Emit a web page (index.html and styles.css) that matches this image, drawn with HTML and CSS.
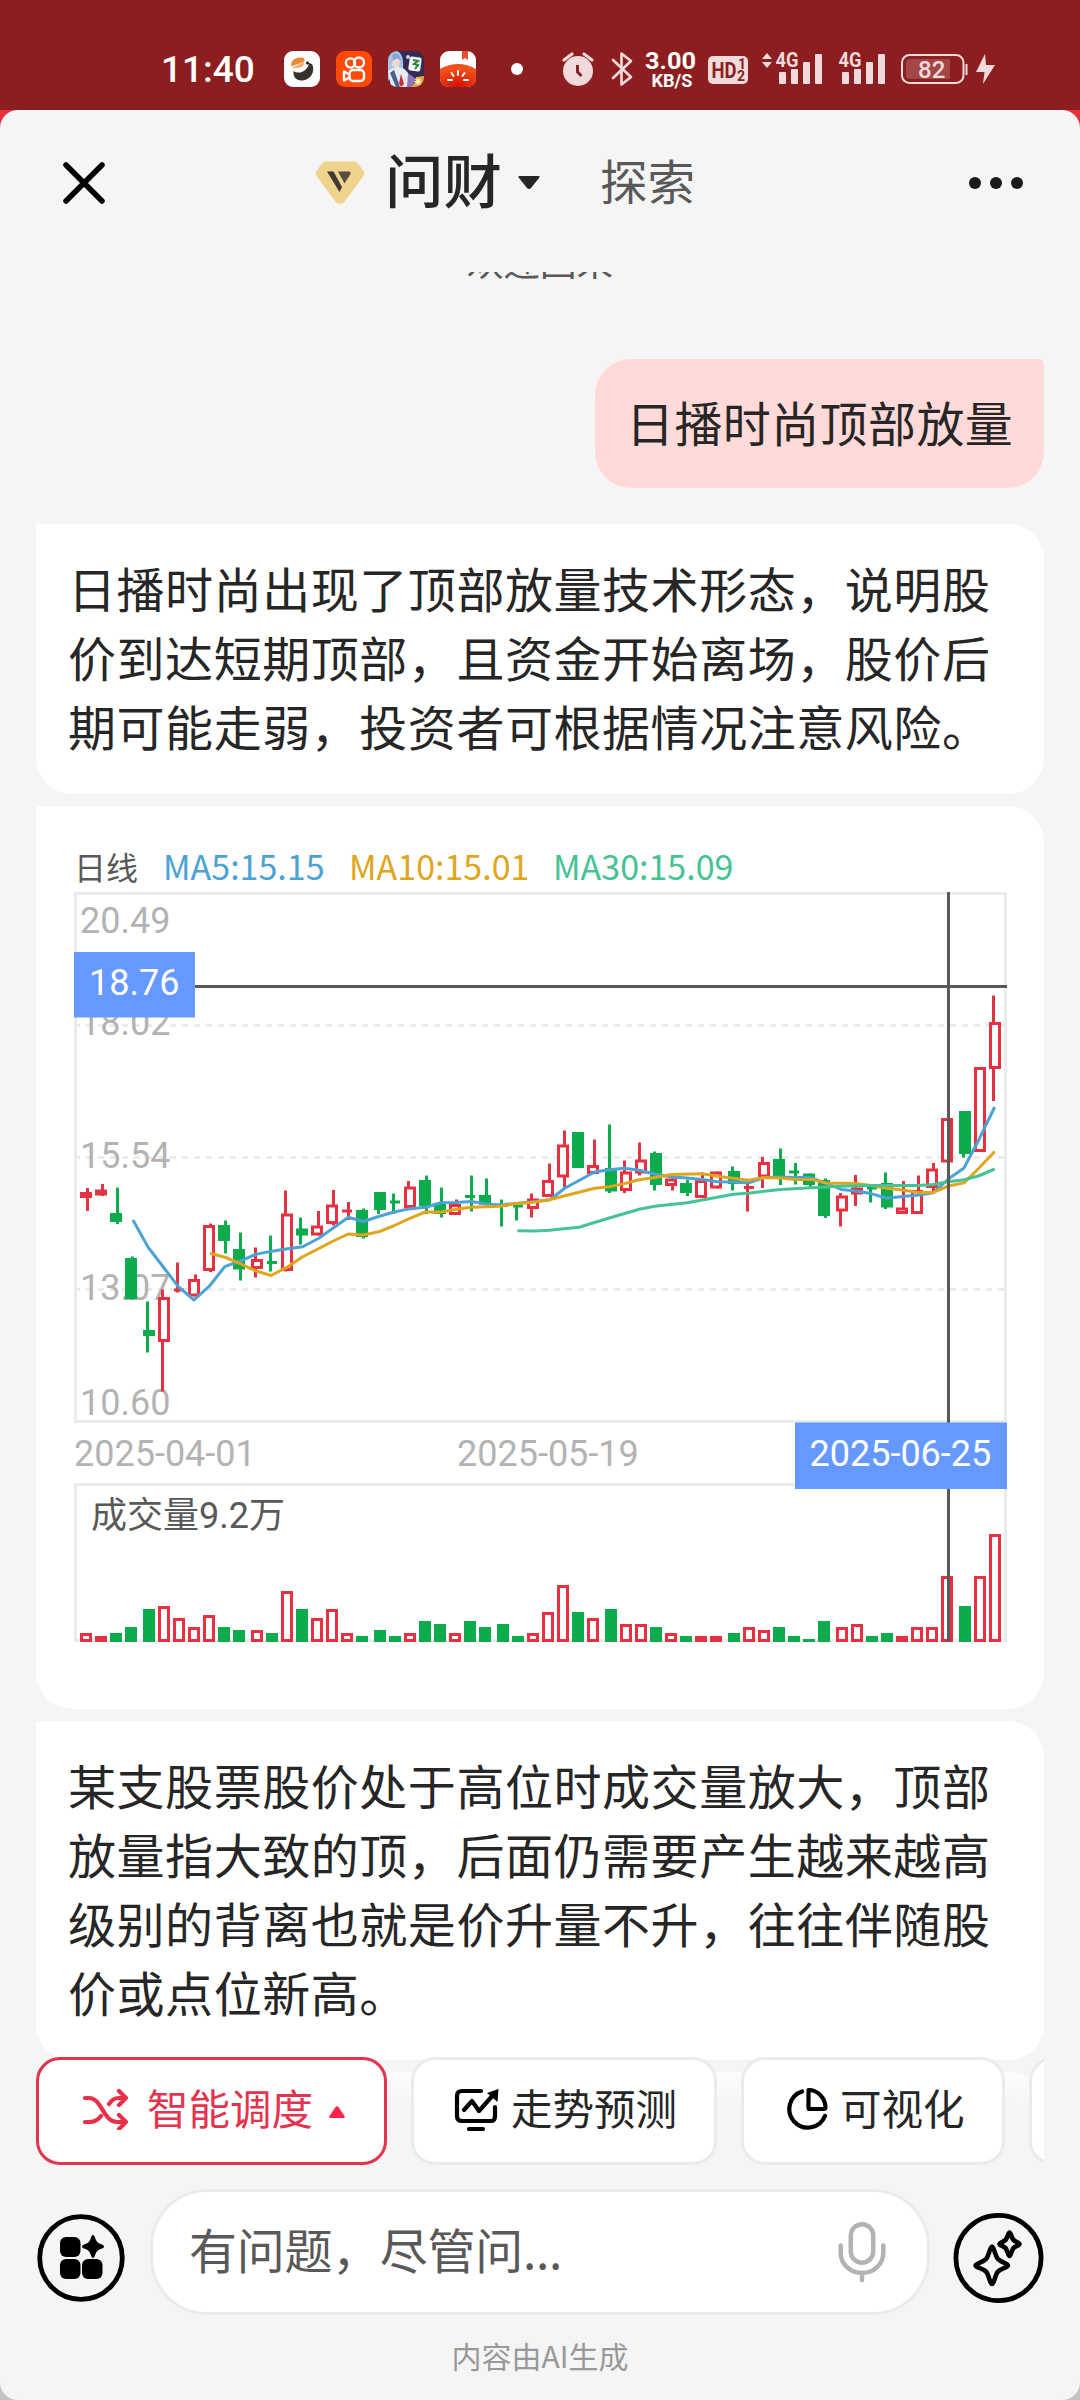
FILE: index.html
```html
<!DOCTYPE html>
<html lang="zh-CN">
<head>
<meta charset="utf-8">
<title>问财</title>
<link rel="stylesheet" href="styles.css">
</head>
<body>
<div class="statusbar">
  <span class="clock">11:40</span>
  <div class="apps">
    <svg class="app" viewBox="0 0 36 36"><rect width="36" height="36" rx="9" fill="#fff"/><path d="M7 15.500C7 9 11 6.500 17 6.500 20 6.500 21 8 20.500 9.500 19 12.500 14 12.500 7 15.500z" fill="#e98a3c"/><path d="M8 17C12 13.500 17 13.500 20.500 10.500 20.500 14 18 16.500 14 17z" fill="#f3ad75"/><path d="M28 13C32 21 26 29.500 17.500 29.500 12 29.500 9 26 9.500 20 15 24 24 20 25 12z" fill="#35312f"/><circle cx="23.500" cy="12" r="1.600" fill="#222"/></svg>
    <svg class="app" viewBox="0 0 36 36"><rect width="36" height="36" rx="9" fill="#ff4a08"/><g fill="none" stroke="#fff" stroke-width="2.400"><circle cx="14.500" cy="12" r="4.600"/><circle cx="23" cy="11.500" r="5"/><rect x="13.500" y="19" width="14.500" height="11" rx="3.500"/><path d="M13.500 23.500 8 20.500v9l5.500-3" stroke-linejoin="round"/></g></svg>
    <svg class="app" viewBox="0 0 36 36"><defs><clipPath id="tile"><rect width="36" height="36" rx="9"/></clipPath></defs><g clip-path="url(#tile)"><rect width="36" height="36" fill="#332a55"/><path d="M0 0h9c7 3 7 14 5 24L0 30z" fill="#a9c4e8"/><path d="M5 6c6-1 8 4 6 9-2 3-5 2-7-1z" fill="#f4d9cf"/><path d="M4 4c5-3 9 0 9 6-3-3-5-3-8 0z" fill="#86a6d6"/><path d="M0 20c8-6 15-5 20 2l1 14H3z" fill="#e6eaf2"/><path d="M6 19l6 17H8L2 22z" fill="#4c5f8d"/><path d="M13 23l3 10-3 3-2-4z" fill="#c93038"/><path d="M20 22l8 6-3 8h-6z" fill="#8b79b8"/><rect x="21" y="6" width="12" height="14" rx="2" fill="#f5f7ef" transform="rotate(8 27 13)"/><path d="M25 9l5 1-4 3 4 1-3 4" fill="none" stroke="#27844d" stroke-width="2"/><circle cx="20" cy="6" r="2" fill="#cfd3ea"/><path d="M36 25v11H22q6-2 6-10z" fill="#eda03b"/><path d="M30 27v7M26.500 30.500h7M27.500 28l5 5m0-5-5 5" stroke="#fff1bd" stroke-width="1.200"/></g></svg>
    <svg class="app" viewBox="0 0 36 36"><defs><radialGradient id="tomato" cx=".5" cy="1" r=".8"><stop stop-color="#d80c00"/><stop offset="1" stop-color="#f0501c"/></radialGradient></defs><rect width="36" height="36" rx="9" fill="#fff"/><path d="M22 0h6v9l-3-2-3 2z" fill="#e8502a"/><path d="M0 18q18-10 36 0v9q0 9-9 9H9q-9 0-9-9z" fill="url(#tomato)"/><path d="M18 20v4M11.500 22l2 3M24.500 22l-2 3M8 29h4M24 29h4" stroke="#fff" stroke-width="2" stroke-linecap="round"/></svg>
  </div>
  <span class="more-apps"></span>
  <svg class="indicators" viewBox="556 46 446 46" width="446" height="46">
    <g fill="#f0dadb">
      <circle cx="578" cy="71" r="15"/>
      <path d="M564 60l8-6M592 60l-8-6" stroke="#f0dadb" stroke-width="3.200" stroke-linecap="round"/>
      <path d="M577.500 65v7l4 4" fill="none" stroke="#8d1e20" stroke-width="3"/>
      <path d="M613 60l18 17-9.500 7.500V53.500L631 61 613 78" fill="none" stroke="#f0dadb" stroke-width="2.600" stroke-linejoin="round" stroke-linecap="round"/>
    </g>
    <text class="speed" x="645" y="69" textLength="51" lengthAdjust="spacingAndGlyphs">3.00</text>
    <text class="speed unit" x="651.500" y="86.500" textLength="41" lengthAdjust="spacingAndGlyphs">KB/S</text>
    <rect x="708" y="56" width="40" height="28" rx="5" fill="#f0dadb"/>
    <text class="hd" x="711.500" y="78" textLength="25" lengthAdjust="spacingAndGlyphs">HD</text>
    <text class="hd-sub" x="738" y="69">1</text><text class="hd-sub" x="737" y="81">2</text>
    <g fill="#f0dadb">
      <path d="M762 59l5-6 5 6zM762 62h10l-5 6z"/>
      <rect x="779" y="72" width="7" height="12" rx="1"/><rect x="791" y="69" width="7" height="15" rx="1"/><rect x="803" y="62" width="7" height="22" rx="1"/><rect x="815" y="54" width="7" height="30" rx="1"/>
      <rect x="842" y="72" width="7" height="12" rx="1"/><rect x="854" y="69" width="7" height="15" rx="1"/><rect x="866" y="62" width="7" height="22" rx="1"/><rect x="878" y="54" width="7" height="30" rx="1"/>
      <path d="M985 54l-9 18h8.500l-1.500 12 12-19h-9z"/>
      <rect x="965.500" y="64" width="2" height="11"/>
    </g>
    <text class="net" x="775.500" y="67" textLength="23" lengthAdjust="spacingAndGlyphs">4G</text>
    <text class="net" x="838.500" y="67" textLength="23" lengthAdjust="spacingAndGlyphs">4G</text>
    <rect x="902" y="55" width="61.500" height="28" rx="7.500" fill="none" stroke="#f0dadb" stroke-width="2"/>
    <path d="M910 59h40v20h-40q-4 0-4-4V63q0-4 4-4z" fill="#a34648"/>
    <text class="battery" x="918" y="78">82</text>
  </svg>
</div>

<div class="backdrop">
<div class="sheet">
  <header class="topbar">
    <svg class="close" width="44" height="44" viewBox="0 0 44 44"><path d="M4 4l36 36M40 4L4 40" stroke="#000" stroke-width="5.500" stroke-linecap="round"/></svg>
    <svg class="logo" width="50" height="43" viewBox="0 0 50 43"><path d="M10.500.500h29q2.500 0 4 2.500l5 7q1.500 2.500 0 5L30 40q-1.500 2.500-4 2.500h-2q-2.500 0-4-2.500L1.500 15q-1.500-2.500 0-5l5-7q1.500-2.500 4-2.500z" fill="#efd38c"/><path d="M12 10.500h6.500L27 26l-2.500 5z" fill="#3f3935"/><path d="M23 10.500h11q2 0 1.500 2.500L29.500 22.500z" fill="#574d42"/></svg>
    <h1 class="title">问财</h1>
    <svg class="caret" width="22" height="13" viewBox="0 0 22 13"><path d="M1.500 0h19q2 0 .5 2l-8 10q-2 2-4 0L1 2Q-.5 0 1.500 0z" fill="#262626"/></svg>
    <span class="tab">探索</span>
    <div class="dots"><i></i><i></i><i></i></div>
  </header>

  <main class="chat">
    <p class="welcome">欢迎回来</p>
    <div class="bubble">日播时尚顶部放量</div>
    <section class="card text">日播时尚出现了顶部放量技术形态，说明股价到达短期顶部，且资金开始离场，股价后期可能走弱，投资者可根据情况注意风险。</section>
    <section class="card chart-card">
      <div class="legend"><span class="name">日线</span><span class="ma5">MA5:15.15</span><span class="ma10">MA10:15.01</span><span class="ma30">MA30:15.09</span></div>
      <svg class="chart" id="chart" width="933" height="750" viewBox="0 0 933 750"></svg>
    </section>
    <section class="card text">某支股票股价处于高位时成交量放大，顶部放量指大致的顶，后面仍需要产生越来越高级别的背离也就是价升量不升，往往伴随股价或点位新高。</section>
    <section class="card next"></section>
  </main>

  <footer class="dock">
    <div class="chips">
      <div class="chip active">
        <svg width="46" height="42" viewBox="0 0 46 42"><g fill="none" stroke="#e8304b" stroke-width="4.200" stroke-linecap="round" stroke-linejoin="round"><path d="M3 10h4c13 0 14 24 28 24h8M3 34h5c5 0 8-2 11-6M27 16c3-4 5-6 10-6h6M37 3l7 7-7 7M37 27l7 7-7 7"/></g></svg>
        <span>智能调度</span>
        <svg class="up" width="16" height="12" viewBox="0 0 16 12"><path d="M6.500 1q1.500-1.500 3 0L15.500 10q1 2-1 2h-13q-2 0-1-2z" fill="#ff2448"/></svg>
      </div>
      <div class="chip">
        <svg width="46" height="44" viewBox="0 0 46 44"><g fill="none" stroke="#000" stroke-width="4.200" stroke-linecap="round" stroke-linejoin="round"><path d="M27 4H8q-5 0-5 5v20q0 5 5 5h29q4 0 4-5V20"/><path d="M10 23l8-9 7 10L40 7"/><path d="M15 42h14"/></g><path d="M44.500 2l-1 13L33 6z"/></svg>
        <span>走势预测</span>
      </div>
      <div class="chip viz">
        <svg width="42" height="44" viewBox="0 0 42 44"><g fill="none" stroke="#000" stroke-width="4.200" stroke-linecap="round" stroke-linejoin="round"><path d="M16 4.500A18.500 18.500 0 1 0 39 29"/><path d="M22.500 3v18q0 1 1 1H38q1.500 0 1.500-2C39 11 32 3 22.500 3z"/></g></svg>
        <span>可视化</span>
      </div>
      <div class="chip cut"></div>
    </div>
    <div class="composer">
      <svg class="round" width="90" height="90" viewBox="0 0 90 90"><circle cx="45" cy="45" r="41.300" fill="none" stroke="#000" stroke-width="4.800"/><rect x="24" y="24" width="20.500" height="20" rx="6"/><rect x="24" y="46" width="20.500" height="20" rx="6"/><rect x="46" y="46" width="20.500" height="20" rx="6"/><path d="M57 22q1.500 0 2.500 4 1.500 4 5 5 3.500 1 3.500 2.500t-3.500 2.500q-3.500 1-5 5-1 4-2.500 4t-2.500-4q-1.500-4-5-5-3.500-1-3.500-2.500t3.500-2.500q3.500-1 5-5 1-4 2.500-4z"/></svg>
      <div class="field">
        <span>有问题，尽管问...</span>
        <svg width="48" height="62" viewBox="0 0 48 62" fill="none" stroke="#b3b3b3" stroke-width="4.500" stroke-linecap="round"><rect x="12.800" y="3.200" width="22.400" height="38.500" rx="11.200"/><path d="M2.700 24.500v7.500a21.300 20 0 0 0 42.600 0v-7.500M24 52v7"/></svg>
      </div>
      <svg class="round" width="91" height="90" viewBox="0 0 91 90" fill="none" stroke="#000" stroke-linejoin="round"><circle cx="45.500" cy="45" r="42.600" stroke-width="4.800"/><path stroke-width="4.600" d="M39 33.500C41 33.500 42 43 45 46 48 49.500 55 50.500 55 52.500S48 55.500 45 58.500C42 62 41 71 39 71S36 62 33 58.500C30 55.500 22.500 54.500 22.500 52.500S30 49.500 33 46C36 43 37 33.500 39 33.500z"/><path stroke-width="4.600" d="M56.500 19.500C58 19.500 58.500 25 60.500 27 62.500 29 66.500 29.500 66.500 31S62.500 33 60.500 35C58.500 37 58 43 56.500 43S54.500 37 52.500 35C50.500 33 46.500 32.500 46.500 31S50.500 29 52.500 27C54.500 25 55 19.500 56.500 19.500z"/></svg>
    </div>
    <p class="note">内容由AI生成</p>
  </footer>
</div>
</div>
<script src="chart.js"></script>
</body>
</html>
```
FILE: styles.css
```css
* { box-sizing: border-box; margin: 0; padding: 0; }
body {
  width: 1080px; height: 2400px; overflow: hidden;
  display: flex; flex-direction: column;
  font-family: "Noto Sans CJK SC", sans-serif; color: #262626;
}
svg { display: block; flex: none; }

.statusbar { height: 110px; background: #8d1e20; display: flex; align-items: center; padding: 28px 0 0 161px; flex: none; }
.clock { width: 123px; padding-top: 2px; font: 500 37px/36px Roboto, sans-serif; color: #fff; }
.apps { display: flex; gap: 16px; }
.app { width: 36px; height: 36px; }
.more-apps { width: 12px; height: 12px; border-radius: 50%; background: #fff; margin-left: 35px; }
.indicators { margin-left: 33px; }
.indicators text { font-family: Roboto, sans-serif; fill: #f0dadb; }
.indicators .speed { font-size: 24.500px; font-weight: 700; fill: #fff; }
.indicators .unit { font-size: 19px; }
.indicators .hd { font-size: 22px; font-weight: 700; fill: #8d1e20; }
.indicators .hd-sub { font-size: 14px; font-weight: 700; fill: #8d1e20; }
.indicators .net { font-size: 20px; font-weight: 700; }
.indicators .battery { font-size: 24px; font-weight: 500; }

.backdrop { height: 2290px; background: linear-gradient(#e9303a 0 50%, #c4c4c4 50%); }
.sheet { height: 100%; background: #f5f5f5; border-radius: 18px; overflow: hidden; display: flex; flex-direction: column; }

.topbar { height: 162px; flex: none; display: flex; align-items: center; padding: 0 57px 17px 62px; }
.logo { margin-left: 209px; }
.title { margin: -9px 0 0 20px; font-size: 58.500px; font-weight: 500; line-height: 72px; width: 119px; white-space: nowrap; }
.caret { margin-left: 14px; }
.tab { margin: -6px 0 0 60px; font-size: 47.500px; line-height: 60px; color: #595959; }
.dots { margin-left: auto; display: flex; gap: 9px; }
.dots i { width: 12px; height: 12px; border-radius: 50%; background: #1a1a1a; }

.chat { height: 1893px; flex: none; overflow: hidden; padding: 0 36px; display: flex; flex-direction: column; }
.welcome { margin-top: -29px; height: 36px; font-size: 36.500px; line-height: 36px; text-align: center; color: #595959; flex: none; }
.bubble { align-self: flex-end; margin-top: 80px; height: 129px; width: 449px; padding: 0 0 0 31px; font-size: 48px; line-height: 124px; letter-spacing: .4px; background: #ffdad8; border-radius: 36px 6px 36px 36px; flex: none; white-space: nowrap; }
.card { flex: none; background: #fff; border-radius: 4px 36px 36px 36px; margin-top: 12px; }
.bubble + .card { margin-top: 36px; }
.text { padding: 29px 30px 34px 32px; font-size: 48px; line-height: 69px; letter-spacing: .55px; }
.next { height: 200px; }

.chart-card { height: 903px; padding-left: 38px; }
.legend { height: 86px; padding-top: 40px; display: flex; font-size: 34px; line-height: 40px; white-space: nowrap; }
.legend .name { font-size: 32px; width: 89px; color: #595959; }
.ma5 { width: 186px; color: #4aa3d4; }
.ma10 { width: 204px; color: #dfa51c; }
.ma30 { color: #45c394; }
.chart { font-family: Roboto, "Noto Sans CJK SC", sans-serif; font-size: 36px; }
.axis { fill: #b3b3b3; }
.flag { fill: #fff; }
.volume { fill: #595959; }
.frame { fill: none; stroke: #ebebeb; stroke-width: 3; }
.grid { stroke: #ebebeb; stroke-width: 3; stroke-dasharray: 6 6; }
.cross { stroke: #595959; stroke-width: 3; }
.tag { fill: #6699ff; }
.up-wick { fill: #e13443; }
.up-body { fill: #fff; stroke: #e92f40; stroke-width: 3; }
.down { fill: #0cab4c; }
.line { fill: none; stroke-width: 3; stroke-linejoin: round; }
.line5 { stroke: #4aa3d4; }
.line10 { stroke: #dfa51c; }
.line30 { stroke: #45c394; }

.dock { margin-top: -108px; position: relative; flex: 1; display: flex; flex-direction: column; }
.chips { margin: 0 36px; height: 108px; display: flex; gap: 24px; overflow: hidden; background: linear-gradient(rgba(245,245,245,0), rgba(245,245,245,.9) 45%, #f5f5f5); flex: none; }
.chip { flex: none; width: 306px; height: 108px; border: 3px solid #ebebeb; border-radius: 24px; background: #fff; display: flex; align-items: center; padding: 0 0 4px 40px; font-size: 41.500px; line-height: 60px; white-space: nowrap; }
.chip span { margin: -4px 0 0 11px; }
.chip.active { width: 351px; border-color: #e4334e; color: #e4334e; padding-left: 43px; }
.chip.active span { margin-left: 19px; }
.chip .up { margin: 6px 0 0 16px; }
.chip.viz { width: 264px; padding-left: 42px; }
.chip.viz span { margin-left: 12px; }
.composer { margin: 24px 36px 0; height: 126px; display: flex; align-items: center; flex: none; }
.round { margin-top: 12px; }
.field { width: 781px; height: 126px; margin: 0 23px 0 24px; border: 3px solid #ebebeb; border-radius: 57px; background: #fff; display: flex; align-items: center; justify-content: space-between; padding: 0 41px 0 36px; font-size: 48px; line-height: 70px; letter-spacing: -.3px; color: #595959; }
.field span { margin-top: -8px; }
.note { margin-top: 22px; font-size: 30px; line-height: 36px; text-align: center; color: #999; }
```
FILE: chart.js
```js
// One row per trading day: x, high, body top, body bottom, low, direction (1 up, 0 down), volume bar height.
const days = [
  [6,296,300,306,319,1,9],[21,292,297.5,303.5,304,1,6],[36,295.5,321,330,332,0,9],[51,364.5,366,407.5,407.5,0,15],
  [69,409.5,438,444,460.5,0,33],[84,397.5,405,450,499.5,1,36],[99,370.5,396.5,398.5,400.5,1,24],[114,382.5,387,404.5,404.5,1,15],
  [129,331.5,333,379,380,1,27],[144,328.5,333,349,361.5,0,15],[159,340.5,357,377.5,388.5,0,12],[177,355.5,367,377,385.5,1,12],
  [192,343.5,369,372,379.5,0,9],[207,298.5,321.5,379,379.5,1,51],[222,325.5,336.5,343.5,352.5,0,33],[237,319,333.5,343.5,343.5,1,24],
  [252,298,312.5,332,333.5,1,33],[267,310,317.5,320.5,328,1,9],[282,316.5,318,345,346.5,0,6],[300,300,300,318,322,0,12],
  [315,301.5,308.5,311.5,322,0,6],[330,289,294.5,316,316,1,9],[345,283.5,288,314,322,0,21],[360,295.5,312,322,325.5,0,18],
  [375,307.5,312,323,323,1,9],[390,283.5,303,306,319.5,0,21],[405,286.5,303,312.5,312.5,0,15],[423,307.5,312,314.5,334.5,0,18],
  [438,310,312.5,315.5,328.5,0,6],[453,301.5,306.5,317,325.5,1,9],[468,271.5,288,305,305,1,30],[483,238.5,252.5,285.5,295,1,57],
  [498,240,240,276,276,0,30],[513,247.5,273,282,282,1,24],[531,232.5,276,299.5,301,0,33],[546,268.5,279.5,299,301,1,18],
  [561,250.5,267.5,281.5,283.5,1,18],[576,259.5,261,293,298.5,0,15],[591,286.5,286.5,294,298.5,1,9],[606,287.5,291,301,304,0,6],
  [621,280.5,288,306,306,1,6],[636,279.5,279.5,296.5,296.5,1,6],[654,274.5,279,292,298.5,0,9],[669,289,294,297,319.5,1,15],
  [684,265,270,285.5,296,1,12],[699,256.5,267,286,293,0,15],[714,271,278.5,281.5,292.5,0,6],[729,281.5,281.5,293,295.5,0,3],
  [744,286.5,288,324,326,0,21],[762,301,303.5,319.5,334.5,1,15],[777,283,295.5,302.5,314,1,18],[792,294,294.5,297,310.5,0,6],
  [807,280.5,291,315.5,317,0,9],[822,289,315.5,322,322,1,6],[837,283.5,298,322,322,1,15],[852,271,276.5,296,299,1,15],
  [867,226,226,270.5,270.5,1,66],[885,219,219,262,265.5,0,36],[900,175,175,260,260,1,66],[915,103.5,130,177,209,1,108]
];

const ma5 = "59,328 74.3,355.5 89.3,375 104.3,394.6 120,408 135.3,394.2 150.7,374.7 166.3,369 181.7,362.4 196.7,359.4 211.7,357 228.7,354.8 244.7,346.3 259.3,336 274.3,325.3 289.3,329.5 304.7,324.5 319.3,320.3 334.7,316.9 352.7,315 366.7,310.7 382.3,310.4 397.3,309.6 412.3,312 427.3,313 442.3,311.5 457.3,310 476,307.7 490.7,296.2 520.7,280 535.3,277.8 550.3,276.3 565.3,278.2 580.7,282 597.7,285 613.3,285.9 628.3,287.4 643.3,289.7 659.3,290 674.7,290.9 690.3,285.5 706,285 721.3,285.5 736,285.5 751.3,290.9 767.3,297.4 782,298.9 797,301.6 812.7,306.2 828.7,304.6 844.3,303 859.3,300.8 874.3,287 890,276 904.3,248.8 920.7,215";
const ma10 = "136,361.3 151.7,365.5 166.3,371.6 181.7,378.9 197,383.5 212.7,375.4 228.3,365 259.3,349 274.3,342 289.3,343 304.7,339.8 319.3,334 334.7,326.8 351.3,320 367.3,320 382.3,317.3 397.3,315.3 426,314.2 442.3,311.5 457.3,310.4 475.3,307.7 520.7,296.2 535.3,294.7 550.3,291.6 565.3,287.8 580.7,285.5 597.7,282.4 628.3,281.7 643.3,284.3 674.7,288.2 690.3,285.5 706,285.9 721.3,287.4 737.7,287.4 751.3,290.9 782,291.6 797,293.5 812.7,296.2 828.7,298 844.3,300.4 859.3,300.4 874.3,294 890,290.9 904.3,276.7 920.7,259.5";
const ma30 = "443.3,338.7 460.7,339 475.3,338.3 505,335.2 535.3,326 565.3,317.3 580.7,314.2 613.3,310.7 628.3,308 659.3,302.3 674.7,301.2 706,297.4 737.7,295.8 766.3,294.3 797,293.5 844.3,293.5 859.3,292.4 874.3,289.7 890,287.8 904.3,284 920.7,277";

const rect = (cls, x, y, w, h) => `<rect class="${cls}" x="${x}" y="${y}" width="${w}" height="${h}"/>`;
const label = (cls, x, y, s) => `<text class="${cls}" x="${x}" y="${y}">${s}</text>`;

// Rising bars are hollow; thin ones collapse into a solid strip.
function bar(x, top, bottom, up) {
  const h = bottom - top;
  if (!up) return rect("down", x, top, 12, h);
  if (h <= 6) return rect("up-wick", x, top, 12, h);
  return rect("up-body", x + 1.5, top + 1.5, 9, h - 3);
}

let out = rect("frame", 1.5, 1.5, 930, 528) + rect("frame", 1.5, 592.5, 930, 156);
[133.5, 265.5, 397.5].forEach(y => { out += `<path class="grid" d="M0 ${y}H930"/>`; });
[["20.49", 41], ["18.02", 143], ["15.54", 276], ["13.07", 407.5], ["10.60", 523]].forEach(([s, y]) => { out += label("axis", 6, y, s); });
out += label("axis", 0, 573.5, "2025-04-01") + label("axis", 383, 573.5, "2025-05-19") + label("volume", 17, 636, "成交量9.2万");

days.forEach(([x, high, top, bottom, low, up, vol], i) => {
  // Wicks sit on a 3px raster.
  const wickX = 3 * Math.floor((12.45 + 15.39 * i) / 3);
  out += rect(up ? "up-wick" : "down", wickX, high, 3, low - high);
  out += bottom - top <= 3 ? rect(up ? "up-wick" : "down", x + 1, top, 10, 3) : bar(x, top, bottom, up);
  out += bar(x, 750 - vol, 750, up);
});

out += `<polyline class="line line5" points="${ma5}"/><polyline class="line line10" points="${ma10}"/><polyline class="line line30" points="${ma30}"/>`;
out += '<path class="cross" d="M0 94.500H933M874.500 0V750"/>';
out += rect("tag", 0, 60, 121, 65.5) + label("flag", 15, 103, "18.76");
out += rect("tag", 721, 530.5, 212, 66.5) + label("flag", 735.5, 573.5, "2025-06-25");
document.getElementById("chart").innerHTML = out;
```
